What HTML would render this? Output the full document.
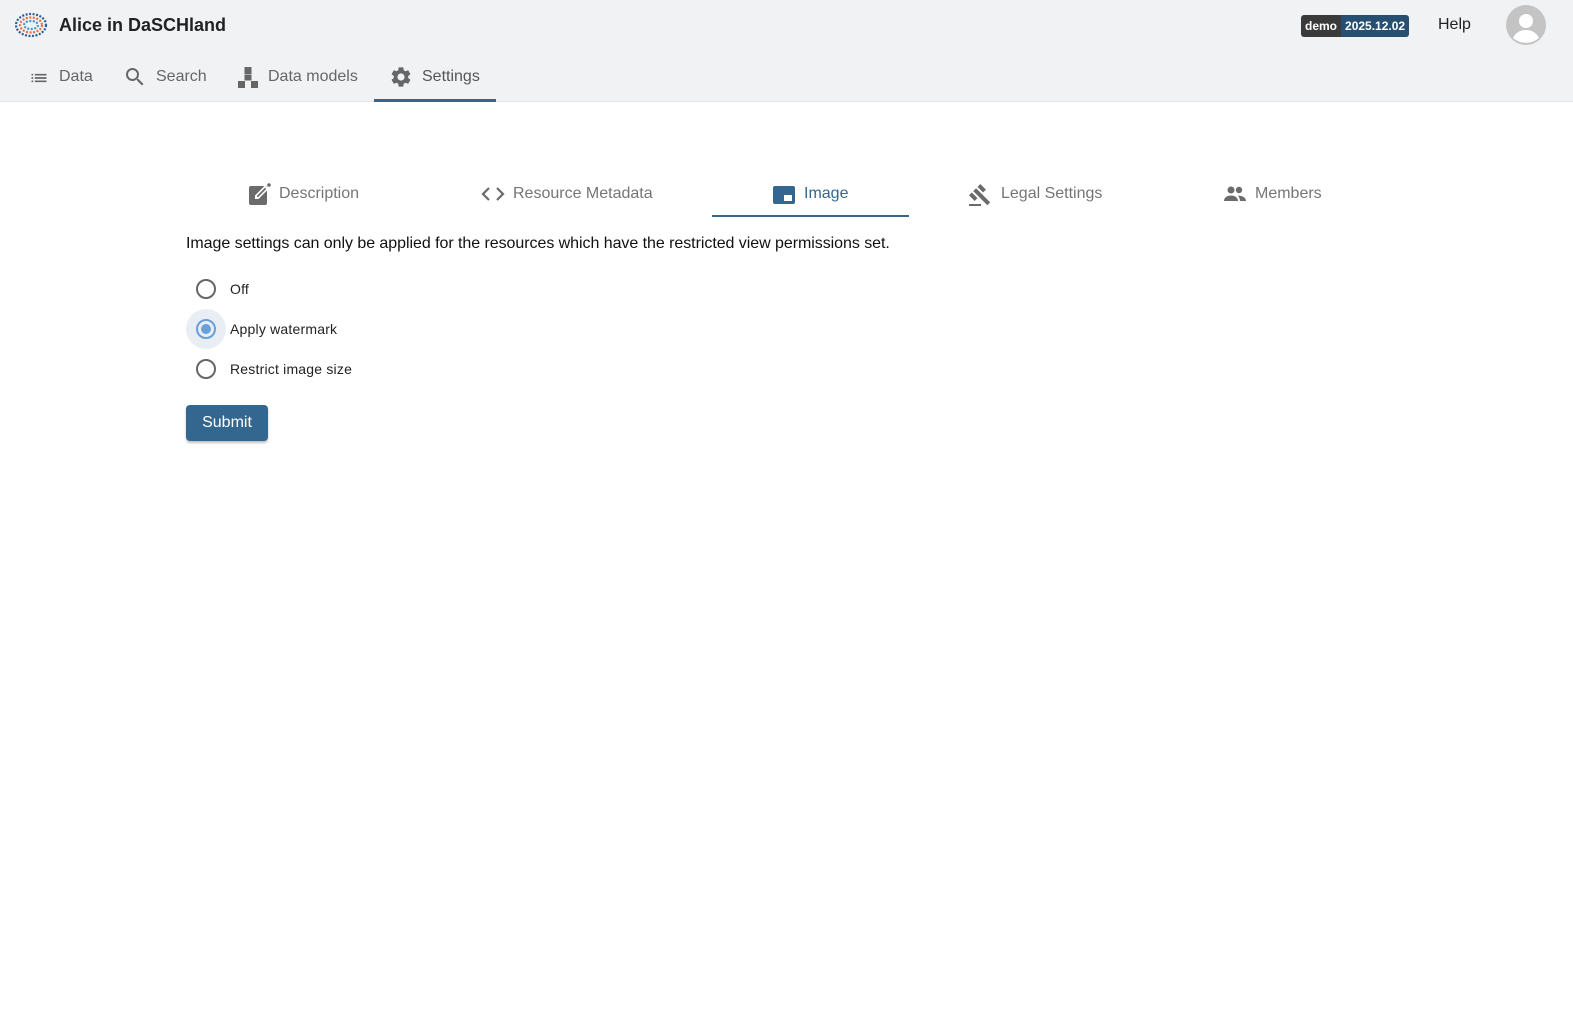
<!DOCTYPE html>
<html><head><meta charset="utf-8"><style>
*{margin:0;padding:0;box-sizing:border-box}
body{width:1573px;height:1026px;background:#fff;font-family:"Liberation Sans",sans-serif;position:relative;overflow:hidden}
.hdr{position:absolute;left:0;top:0;width:1573px;height:102px;background:#f1f2f4;border-bottom:1px solid #e4e5e8}
.abs{position:absolute;white-space:nowrap}
.nav{font-size:16px;color:#666;top:68px}
.tab{font-size:16px;color:#757575;top:185px}
.radio{position:absolute;width:20px;height:20px;border:2px solid #666;border-radius:50%}
.lbl{font-size:14px;color:#222;letter-spacing:.2px}
</style></head><body>
<div class="hdr"></div>
<svg class="abs" style="left:14px;top:11px" width="34" height="28" viewBox="0 0 34 28"><g fill="none" stroke-width="2.2" stroke-dasharray="2 1.5"><ellipse cx="17" cy="14" rx="15" ry="11" stroke="#2a5d9a"/><ellipse cx="17" cy="14" rx="11" ry="7.5" stroke="#e0704a"/><ellipse cx="17" cy="14" rx="7" ry="4" stroke="#3a9ad0"/></g></svg>
<div class="abs" style="left:59px;top:15px;font-size:18px;font-weight:bold;color:#222">Alice in DaSCHland</div>
<div class="abs" style="left:1301px;top:15px;height:22px;border-radius:3px;overflow:hidden;font-size:12px;font-weight:bold;color:#fff;display:flex;line-height:22px"><span style="background:#3a3a3a;padding:0 4px">demo</span><span style="background:#264f72;padding:0 4px">2025.12.02</span></div>
<div class="abs" style="left:1438px;top:16px;font-size:16px;color:#222">Help</div>
<svg class="abs" style="left:1506px;top:5px" width="40" height="40" viewBox="0 0 40 40"><circle cx="20" cy="20" r="20" fill="#c4c4c4"/><circle cx="20" cy="16" r="7" fill="#fff"/><path d="M7 33c3-6 8-8 13-8s10 2 13 8a20 20 0 0 1-26 0z" fill="#fff"/></svg>
<svg class="abs" style="left:28px;top:68px" width="22" height="20" viewBox="0 0 24 24" fill="#666"><path d="M3 13h2v-2H3v2zm0 4h2v-2H3v2zm0-8h2V7H3v2zm4 4h14v-2H7v2zm0 4h14v-2H7v2zM7 7v2h14V7H7z"/></svg>
<div class="abs nav" style="left:59px">Data</div>
<svg class="abs" style="left:123px;top:65px" width="24" height="24" viewBox="0 0 24 24" fill="#666"><path d="M15.5 14h-.79l-.28-.27A6.47 6.47 0 0 0 16 9.5 6.5 6.5 0 1 0 9.5 16c1.61 0 3.09-.59 4.23-1.57l.27.28v.79l5 4.99L20.49 19l-4.99-5zm-6 0C7.01 14 5 11.99 5 9.5S7.01 5 9.5 5 14 7.01 14 9.5 11.99 14 9.5 14z"/></svg>
<div class="abs nav" style="left:156px">Search</div>
<svg class="abs" style="left:238px;top:67px" width="20" height="22" viewBox="0 0 20 22" fill="#666"><rect x="6.5" y="0" width="7" height="7"/><rect x="0" y="14" width="7" height="7"/><rect x="13" y="14" width="7" height="7"/><rect x="6.5" y="7.5" width="7" height="6"/></svg>
<div class="abs nav" style="left:268px">Data models</div>
<svg class="abs" style="left:389px;top:65px" width="24" height="24" viewBox="0 0 24 24" fill="#666"><path d="M19.14 12.94c.04-.3.06-.61.06-.94 0-.32-.02-.64-.07-.94l2.03-1.58a.49.49 0 0 0 .12-.61l-1.92-3.32a.49.49 0 0 0-.59-.22l-2.390.96c-.5-.38-1.03-.7-1.62-.94l-.36-2.54a.48.48 0 0 0-.48-.41h-3.84c-.24 0-.43.17-.47.41l-.36 2.54c-.59.24-1.130.57-1.62.94l-2.39-.96a.48.48 0 0 0-.59.22L2.74 8.87c-.12.21-.08.47.12.61l2.03 1.58c-.05.3-.09.63-.09.94s.02.64.07.94l-2.03 1.58a.49.49 0 0 0-.12.61l1.92 3.32c.12.22.37.29.59.22l2.39-.96c.5.38 1.03.7 1.62.94l.36 2.54c.05.24.24.41.48.41h3.84c.24 0 .44-.17.47-.41l.36-2.54c.59-.24 1.13-.56 1.62-.94l2.39.96c.22.08.47 0 .59-.22l1.92-3.32c.12-.22.07-.47-.12-.61l-2.01-1.58zM12 15.6A3.6 3.6 0 1 1 12 8.4a3.6 3.6 0 0 1 0 7.2z"/></svg>
<div class="abs nav" style="left:422px;color:#555">Settings</div>
<div class="abs" style="left:374px;top:99px;width:122px;height:3px;background:#336790"></div>

<svg class="abs" style="left:248px;top:182px" width="24" height="24" viewBox="0 0 24 24"><rect x="1" y="4" width="18" height="19" rx="2" fill="#6b6b6b"/><path d="M7 17v-3.5L17 3.5l3.5 3.5L10.5 17z" fill="#fff"/><path d="M9 15v-1.2L17 5.8l1.2 1.2L10.2 15z" fill="#6b6b6b"/><circle cx="21" cy="3" r="1.8" fill="#6b6b6b"/></svg>
<div class="abs tab" style="left:279px">Description</div>
<svg class="abs" style="left:481px;top:184px" width="24" height="20" viewBox="0 0 24 20" fill="none" stroke="#6b6b6b" stroke-width="2.2"><path d="M8 4l-6 6 6 6M16 4l6 6-6 6"/></svg>
<div class="abs tab" style="left:513px">Resource Metadata</div>
<svg class="abs" style="left:772px;top:185px" width="24" height="20" viewBox="0 0 24 20"><rect x="1" y="1" width="22" height="18" rx="2" fill="#336790"/><rect x="12" y="10" width="8" height="6" fill="#fff"/></svg>
<div class="abs tab" style="left:804px;color:#336790">Image</div>
<div class="abs" style="left:712px;top:215px;width:197px;height:2px;background:#336790"></div>
<svg class="abs" style="left:968px;top:183px" width="24" height="24" viewBox="0 0 24 24" fill="#6b6b6b"><path d="M1 21h12v2H1zM5.24 8.07l2.83-2.83 14.14 14.14-2.83 2.83zM12.32 1l5.66 5.66-2.83 2.83-5.66-5.66zM3.830 9.48l5.66 5.66-2.83 2.83L1 12.31z"/></svg>
<div class="abs tab" style="left:1001px">Legal Settings</div>
<svg class="abs" style="left:1223px;top:184px" width="24" height="20" viewBox="0 0 24 20" fill="#6b6b6b"><circle cx="8" cy="6" r="3.5"/><circle cx="16" cy="6" r="3.2"/><path d="M1 17c0-4 4-5.5 7-5.5s7 1.5 7 5.5zM15 11.6c3 0 8 1.2 8 5.4h-6c0-2.200-1-4-2-5.4z"/></svg>
<div class="abs tab" style="left:1255px">Members</div>

<div class="abs" style="left:186px;top:235px;font-size:16px;color:#111;letter-spacing:-.05px">Image settings can only be applied for the resources which have the restricted view permissions set.</div>

<div class="radio" style="left:196px;top:279px"></div>
<div class="abs lbl" style="left:230px;top:281px">Off</div>
<div class="abs" style="left:186px;top:309px;width:40px;height:40px;border-radius:50%;background:#e9eef5"></div>
<div class="radio" style="left:196px;top:319px;border-color:#6a9fd8"></div>
<div class="abs" style="left:201px;top:324px;width:10px;height:10px;border-radius:50%;background:#6a9fd8"></div>
<div class="abs lbl" style="left:230px;top:321px">Apply watermark</div>
<div class="radio" style="left:196px;top:359px"></div>
<div class="abs lbl" style="left:230px;top:361px">Restrict image size</div>

<div class="abs" style="left:186px;top:405px;width:82px;height:36px;background:#336790;border-radius:4px;box-shadow:0 2px 2px rgba(0,0,0,.25);color:#fff;font-size:16px;text-align:center;line-height:36px">Submit</div>
</body></html>
